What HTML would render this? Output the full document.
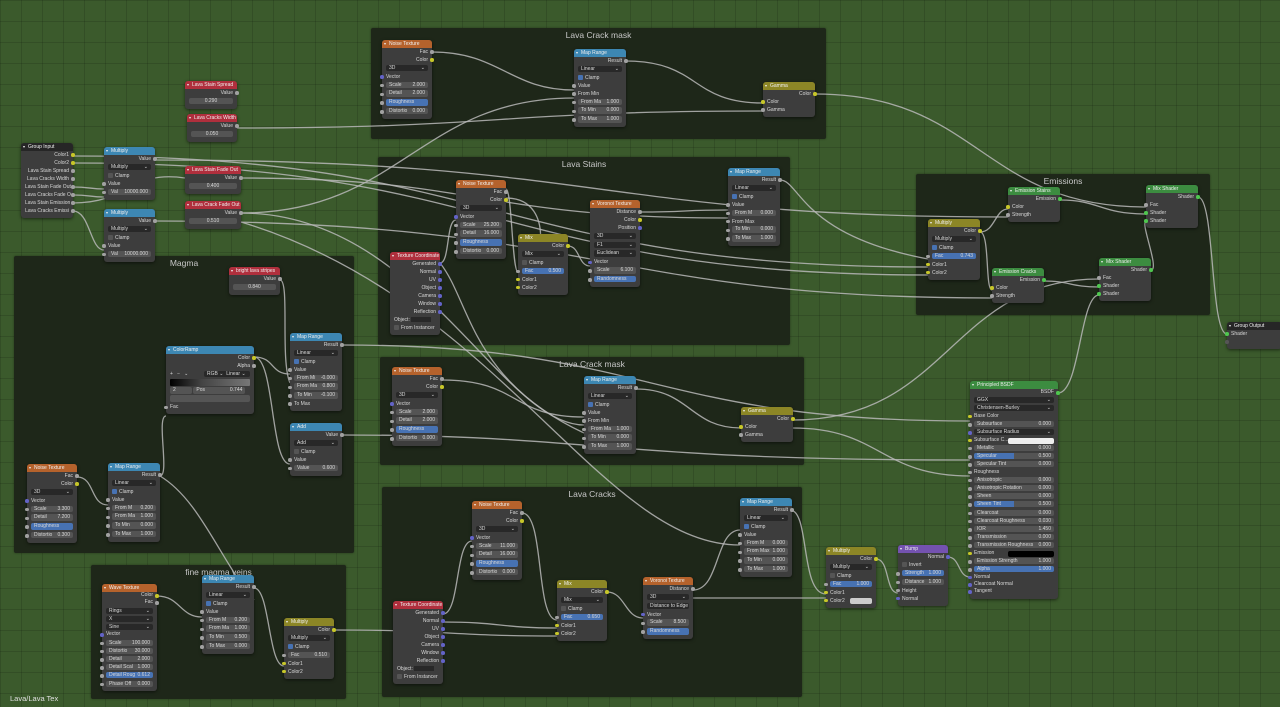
<!DOCTYPE html>
<html><head><meta charset="utf-8"><style>
*{box-sizing:border-box;margin:0;padding:0}
body{width:1280px;height:707px;overflow:hidden;background:#3b5a2c;background-image:linear-gradient(rgba(0,0,0,.13) 1px,transparent 1px),linear-gradient(90deg,rgba(0,0,0,.13) 1px,transparent 1px);background-size:21px 21px;position:relative;font-family:"Liberation Sans",sans-serif}
.fr{position:absolute;background:#1e2719;border-radius:2px;box-shadow:0 0 2px rgba(0,0,0,.4);z-index:0}
.fr span{position:absolute;top:2px;left:0;right:0;text-align:center;color:#c8c8c8;font-size:8.5px}
svg{position:absolute;left:0;top:0;z-index:1}
.n{position:absolute;background:#3d3d3d;border-radius:3px;box-shadow:0 1px 3px rgba(0,0,0,.55);font-size:5px;color:#d8d8d8;padding-bottom:3px;z-index:2}
.h{height:8px;line-height:8px;padding-left:7px;color:#eee;border-radius:3px 3px 0 0;white-space:nowrap;overflow:hidden;position:relative}
.h:before{content:"▾";position:absolute;left:2px;font-size:4px}
.o1{background:#b5622c}.b1{background:#3d87b3}.r1{background:#b02f3d}.y1{background:#8c8626}.g1{background:#3c8c40}.p1{background:#7452b0}.k1{background:#262626}
.r{height:8px;line-height:8px;padding:0 4px;position:relative;white-space:nowrap}
.o{text-align:right}
.r i{position:absolute;top:2.3px;left:-2px;width:3.6px;height:3.6px;border-radius:50%;background:#a1a1a1}
.o i{left:auto;right:-2px}
i.y{background:#c7c729}i.p{background:#6363c7}i.g{background:#4fc74f}
.f{background:#545454;height:6.5px;line-height:6.5px;margin-top:.75px;border-radius:2px;padding:0 3px;overflow:hidden;text-align:left}
.f b{float:right;font-weight:normal}
.f.bl{background:#4772b3}
.f.d{background:#282828}
.f.d:after{content:"⌄";float:right}
.c{display:inline-block;width:5px;height:5px;background:#555;vertical-align:middle;margin-right:2px;border-radius:1px}
.c.k{background:#4772b3}
.pb .r{height:7.45px;line-height:7.45px}
.pb .r i{top:2px}
.pb .f{height:6px;line-height:6px}
</style></head><body>

<div class="fr" style="left:371px;top:28px;width:455px;height:111px"><span>Lava Crack mask</span></div>
<div class="fr" style="left:378px;top:157px;width:412px;height:188px"><span>Lava Stains</span></div>
<div class="fr" style="left:916px;top:174px;width:294px;height:141px"><span>Emissions</span></div>
<div class="fr" style="left:14px;top:256px;width:340px;height:297px"><span>Magma</span></div>
<div class="fr" style="left:380px;top:357px;width:424px;height:108px"><span>Lava Crack mask</span></div>
<div class="fr" style="left:382px;top:487px;width:420px;height:210px"><span>Lava Cracks</span></div>
<div class="fr" style="left:91px;top:565px;width:255px;height:134px"><span>fine magma veins</span></div>

<svg width="1280" height="707" fill="none" stroke="#b8b8b8" stroke-width="1.3" stroke-opacity=".85">
<path d="M432 52C500 52 510 90 574 90"/>
<path d="M241 213C400 213 420 98 574 98"/>
<path d="M626 61C700 61 690 103 763 103"/>
<path d="M815 94C980 94 980 207 1146 207"/>
<path d="M237 128C500 128 500 111 763 111"/>
<path d="M73 156C500 156 500 267 928 267"/>
<path d="M73 163C500 163 500 275 928 275"/>
<path d="M73 187C90 187 90 189 104 189"/>
<path d="M73 195C90 195 90 197 104 197"/>
<path d="M73 211C90 211 90 250 104 250"/>
<path d="M73 203C130 203 130 170 185 178"/>
<path d="M155 160C600 160 600 217 1008 217"/>
<path d="M155 221C600 221 600 298 992 298"/>
<path d="M241 178C480 178 480 218 728 218"/>
<path d="M241 213C420 213 500 425 584 425"/>
<path d="M241 222C500 300 600 545 740 545"/>
<path d="M506 189C512 189 512 272 518 272"/>
<path d="M440 263C450 263 446 220 456 220"/>
<path d="M506 198C560 198 540 282 518 282"/>
<path d="M568 246C580 246 578 266 590 266"/>
<path d="M640 212C690 212 680 210 728 210"/>
<path d="M780 180C800 180 800 235 928 259"/>
<path d="M980 232C995 232 995 209 1008 209"/>
<path d="M980 232C990 232 985 290 992 290"/>
<path d="M1060 200C1100 200 1100 214 1146 214"/>
<path d="M1151 270C1160 270 1140 222 1146 222"/>
<path d="M1044 281C1070 281 1070 287 1099 287"/>
<path d="M1058 393C1080 393 1080 295 1099 295"/>
<path d="M793 420C950 420 950 279 1099 279"/>
<path d="M1198 197C1215 197 1210 334 1227 334"/>
<path d="M442 380C520 380 510 417 584 417"/>
<path d="M636 389C690 389 690 428 741 428"/>
<path d="M793 428C880 428 880 476 970 476"/>
<path d="M280 280C290 280 280 360 290 383"/>
<path d="M77 477C95 477 90 505 108 505"/>
<path d="M160 476C170 476 156 416 166 416"/>
<path d="M254 357C275 357 270 374 290 374"/>
<path d="M254 357C275 357 270 464 290 464"/>
<path d="M342 345C650 345 650 421 970 421"/>
<path d="M342 435C600 435 600 460 970 460"/>
<path d="M160 476C200 500 220 560 254 600"/>
<path d="M443 614C460 614 455 541 472 541"/>
<path d="M443 622C500 622 500 628 557 628"/>
<path d="M522 513C545 513 535 620 557 620"/>
<path d="M607 592C625 592 625 618 643 618"/>
<path d="M693 590C720 590 715 530 740 530"/>
<path d="M790 510C810 510 800 594 826 594"/>
<path d="M876 559C890 559 885 593 898 593"/>
<path d="M948 557C960 557 958 577 970 577"/>
<path d="M157 596C180 596 180 617 202 617"/>
<path d="M254 588C270 588 268 666 284 666"/>
<path d="M334 630C450 630 450 636 557 636"/>
<path d="M693 598C760 598 760 598 826 598"/>
<path d="M440 263C470 300 470 380 584 433"/>
</svg>

<div class="n" style="left:382px;top:40px;width:50px"><div class="h o1">Noise Texture</div>
<div class="r o">Fac<i></i></div><div class="r o">Color<i class="y"></i></div>
<div class="r"><div class="f d">3D</div></div><div class="r"><i class="p"></i>Vector</div>
<div class="r"><i></i><div class="f">Scale<b>2.000</b></div></div><div class="r"><i></i><div class="f">Detail<b>2.000</b></div></div>
<div class="r"><i></i><div class="f bl">Roughness<b>1.000</b></div></div><div class="r"><i></i><div class="f">Distortio<b>0.000</b></div></div></div>

<div class="n" style="left:574px;top:49px;width:52px"><div class="h b1">Map Range</div>
<div class="r o">Result<i></i></div><div class="r"><div class="f d">Linear</div></div>
<div class="r"><span class="c k"></span>Clamp</div><div class="r"><i></i>Value</div><div class="r"><i></i>From Min</div>
<div class="r"><i></i><div class="f">From Ma<b>1.000</b></div></div><div class="r"><i></i><div class="f">To Min<b>0.000</b></div></div><div class="r"><i></i><div class="f">To Max<b>1.000</b></div></div></div>

<div class="n" style="left:763px;top:82px;width:52px"><div class="h y1">Gamma</div>
<div class="r o">Color<i class="y"></i></div><div class="r"><i class="y"></i>Color</div><div class="r"><i></i>Gamma</div></div>

<div class="n" style="left:185px;top:81px;width:52px"><div class="h r1">Lava Stain Spread</div>
<div class="r o">Value<i></i></div><div class="r"><div class="f" style="text-align:center">0.290</div></div></div>
<div class="n" style="left:187px;top:114px;width:50px"><div class="h r1">Lava Cracks Width</div>
<div class="r o">Value<i></i></div><div class="r"><div class="f" style="text-align:center">0.050</div></div></div>

<div class="n" style="left:21px;top:143px;width:52px"><div class="h k1">Group Input</div>
<div class="r o">Color1<i class="y"></i></div><div class="r o">Color2<i class="y"></i></div><div class="r o">Lava Stain Spread<i></i></div>
<div class="r o">Lava Cracks Width<i></i></div><div class="r o">Lava Stain Fade Out<i></i></div><div class="r o">Lava Cracks Fade O<i></i></div>
<div class="r o">Lava Stain Emission<i></i></div><div class="r o">Lava Cracks Emissi<i></i></div></div>

<div class="n" style="left:104px;top:147px;width:51px"><div class="h b1">Multiply</div>
<div class="r o">Value<i></i></div><div class="r"><div class="f d">Multiply</div></div><div class="r"><span class="c"></span>Clamp</div>
<div class="r"><i></i>Value</div><div class="r"><i></i><div class="f">Val<b>10000.000</b></div></div></div>
<div class="n" style="left:104px;top:209px;width:51px"><div class="h b1">Multiply</div>
<div class="r o">Value<i></i></div><div class="r"><div class="f d">Multiply</div></div><div class="r"><span class="c"></span>Clamp</div>
<div class="r"><i></i>Value</div><div class="r"><i></i><div class="f">Val<b>10000.000</b></div></div></div>

<div class="n" style="left:185px;top:166px;width:56px"><div class="h r1">Lava Stain Fade Out</div>
<div class="r o">Value<i></i></div><div class="r"><div class="f" style="text-align:center">0.400</div></div></div>
<div class="n" style="left:185px;top:201px;width:56px"><div class="h r1">Lava Crack Fade Out</div>
<div class="r o">Value<i></i></div><div class="r"><div class="f" style="text-align:center">0.510</div></div></div>

<div class="n" style="left:456px;top:180px;width:50px"><div class="h o1">Noise Texture</div>
<div class="r o">Fac<i></i></div><div class="r o">Color<i class="y"></i></div>
<div class="r"><div class="f d">3D</div></div><div class="r"><i class="p"></i>Vector</div>
<div class="r"><i></i><div class="f">Scale<b>25.200</b></div></div><div class="r"><i></i><div class="f">Detail<b>16.000</b></div></div>
<div class="r"><i></i><div class="f bl">Roughness<b>0.500</b></div></div><div class="r"><i></i><div class="f">Distortio<b>0.000</b></div></div></div>

<div class="n" style="left:390px;top:252px;width:50px"><div class="h r1">Texture Coordinate</div>
<div class="r o">Generated<i class="p"></i></div><div class="r o">Normal<i class="p"></i></div><div class="r o">UV<i class="p"></i></div>
<div class="r o">Object<i class="p"></i></div><div class="r o">Camera<i class="p"></i></div><div class="r o">Window<i class="p"></i></div>
<div class="r o">Reflection<i class="p"></i></div><div class="r">Object: <span style="display:inline-block;width:20px;height:5px;background:#282828;vertical-align:middle"></span></div><div class="r"><span class="c"></span>From Instancer</div></div>

<div class="n" style="left:518px;top:234px;width:50px"><div class="h y1">Mix</div>
<div class="r o">Color<i class="y"></i></div><div class="r"><div class="f d">Mix</div></div><div class="r"><span class="c"></span>Clamp</div>
<div class="r"><i></i><div class="f bl">Fac<b>0.500</b></div></div><div class="r"><i class="y"></i>Color1</div><div class="r"><i class="y"></i>Color2</div></div>

<div class="n" style="left:590px;top:200px;width:50px"><div class="h o1">Voronoi Texture</div>
<div class="r o">Distance<i></i></div><div class="r o">Color<i class="y"></i></div><div class="r o">Position<i class="p"></i></div>
<div class="r"><div class="f d">3D</div></div><div class="r"><div class="f d">F1</div></div><div class="r"><div class="f d">Euclidean</div></div>
<div class="r"><i class="p"></i>Vector</div><div class="r"><i></i><div class="f">Scale<b>6.100</b></div></div><div class="r"><i></i><div class="f bl">Randomness<b>1.000</b></div></div></div>

<div class="n" style="left:728px;top:168px;width:52px"><div class="h b1">Map Range</div>
<div class="r o">Result<i></i></div><div class="r"><div class="f d">Linear</div></div>
<div class="r"><span class="c k"></span>Clamp</div><div class="r"><i></i>Value</div>
<div class="r"><i></i><div class="f">From M<b>0.000</b></div></div><div class="r"><i></i>From Max</div><div class="r"><i></i><div class="f">To Min<b>0.000</b></div></div><div class="r"><i></i><div class="f">To Max<b>1.000</b></div></div></div>

<div class="n" style="left:928px;top:219px;width:52px"><div class="h y1">Multiply</div>
<div class="r o">Color<i class="y"></i></div><div class="r"><div class="f d">Multiply</div></div><div class="r"><span class="c k"></span>Clamp</div>
<div class="r"><i></i><div class="f bl">Fac<b>0.743</b></div></div><div class="r"><i class="y"></i>Color1</div><div class="r"><i class="y"></i>Color2</div></div>
<div class="n" style="left:1008px;top:187px;width:52px"><div class="h g1">Emission Stains</div>
<div class="r o">Emission<i class="g"></i></div><div class="r"><i class="y"></i>Color</div><div class="r"><i></i>Strength</div></div>
<div class="n" style="left:992px;top:268px;width:52px"><div class="h g1">Emission Cracks</div>
<div class="r o">Emission<i class="g"></i></div><div class="r"><i class="y"></i>Color</div><div class="r"><i></i>Strength</div></div>
<div class="n" style="left:1146px;top:185px;width:52px"><div class="h g1">Mix Shader</div>
<div class="r o">Shader<i class="g"></i></div><div class="r"><i></i>Fac</div><div class="r"><i class="g"></i>Shader</div><div class="r"><i class="g"></i>Shader</div></div>
<div class="n" style="left:1099px;top:258px;width:52px"><div class="h g1">Mix Shader</div>
<div class="r o">Shader<i class="g"></i></div><div class="r"><i></i>Fac</div><div class="r"><i class="g"></i>Shader</div><div class="r"><i class="g"></i>Shader</div></div>
<div class="n" style="left:1227px;top:322px;width:55px"><div class="h k1">Group Output</div>
<div class="r"><i class="g"></i>Shader</div><div class="r"><i style="background:#555"></i></div></div>

<div class="n" style="left:229px;top:267px;width:51px"><div class="h r1">bright lava stripes</div>
<div class="r o">Value<i></i></div><div class="r"><div class="f" style="text-align:center">0.840</div></div></div>
<div class="n" style="left:290px;top:333px;width:52px"><div class="h b1">Map Range</div>
<div class="r o">Result<i></i></div><div class="r"><div class="f d">Linear</div></div>
<div class="r"><span class="c k"></span>Clamp</div><div class="r"><i></i>Value</div>
<div class="r"><i></i><div class="f">From Mi<b>-0.000</b></div></div><div class="r"><i></i><div class="f">From Ma<b>0.800</b></div></div><div class="r"><i></i><div class="f">To Min<b>-0.100</b></div></div><div class="r"><i></i>To Max</div></div>
<div class="n" style="left:166px;top:346px;width:88px"><div class="h b1">ColorRamp</div>
<div class="r o">Color<i class="y"></i></div><div class="r o">Alpha<i></i></div>
<div class="r">+ &nbsp; − &nbsp; ⌄ <span style="position:absolute;right:4px;top:1px;background:#282828;height:6px;line-height:6px;width:46px;border-radius:2px;padding-left:3px">RGB ⌄ &nbsp;Linear ⌄</span></div>
<div class="r"><div style="height:7px;margin-top:.5px;background:linear-gradient(90deg,#000,#444 40%,#777);border-radius:1px"></div></div>
<div class="r"><div class="f" style="display:inline-block;width:22px;vertical-align:top">2</div> <div class="f" style="display:inline-block;width:52px;vertical-align:top">Pos<b>0.744</b></div></div>
<div class="r"><div class="f" style="background:#555"></div></div><div class="r"><i></i>Fac</div></div>
<div class="n" style="left:290px;top:423px;width:52px"><div class="h b1">Add</div>
<div class="r o">Value<i></i></div><div class="r"><div class="f d">Add</div></div><div class="r"><span class="c"></span>Clamp</div>
<div class="r"><i></i>Value</div><div class="r"><i></i><div class="f">Value<b>0.600</b></div></div></div>
<div class="n" style="left:27px;top:464px;width:50px"><div class="h o1">Noise Texture</div>
<div class="r o">Fac<i></i></div><div class="r o">Color<i class="y"></i></div>
<div class="r"><div class="f d">3D</div></div><div class="r"><i class="p"></i>Vector</div>
<div class="r"><i></i><div class="f">Scale<b>3.300</b></div></div><div class="r"><i></i><div class="f">Detail<b>7.200</b></div></div>
<div class="r"><i></i><div class="f bl">Roughness<b>0.495</b></div></div><div class="r"><i></i><div class="f">Distortio<b>0.300</b></div></div></div>
<div class="n" style="left:108px;top:463px;width:52px"><div class="h b1">Map Range</div>
<div class="r o">Result<i></i></div><div class="r"><div class="f d">Linear</div></div>
<div class="r"><span class="c k"></span>Clamp</div><div class="r"><i></i>Value</div>
<div class="r"><i></i><div class="f">From M<b>0.200</b></div></div><div class="r"><i></i><div class="f">From Ma<b>1.000</b></div></div><div class="r"><i></i><div class="f">To Min<b>0.000</b></div></div><div class="r"><i></i><div class="f">To Max<b>1.000</b></div></div></div>

<div class="n" style="left:392px;top:367px;width:50px"><div class="h o1">Noise Texture</div>
<div class="r o">Fac<i></i></div><div class="r o">Color<i class="y"></i></div>
<div class="r"><div class="f d">3D</div></div><div class="r"><i class="p"></i>Vector</div>
<div class="r"><i></i><div class="f">Scale<b>2.000</b></div></div><div class="r"><i></i><div class="f">Detail<b>2.000</b></div></div>
<div class="r"><i></i><div class="f bl">Roughness<b>1.000</b></div></div><div class="r"><i></i><div class="f">Distortio<b>0.000</b></div></div></div>
<div class="n" style="left:584px;top:376px;width:52px"><div class="h b1">Map Range</div>
<div class="r o">Result<i></i></div><div class="r"><div class="f d">Linear</div></div>
<div class="r"><span class="c k"></span>Clamp</div><div class="r"><i></i>Value</div><div class="r"><i></i>From Min</div>
<div class="r"><i></i><div class="f">From Ma<b>1.000</b></div></div><div class="r"><i></i><div class="f">To Min<b>0.000</b></div></div><div class="r"><i></i><div class="f">To Max<b>1.000</b></div></div></div>
<div class="n" style="left:741px;top:407px;width:52px"><div class="h y1">Gamma</div>
<div class="r o">Color<i class="y"></i></div><div class="r"><i class="y"></i>Color</div><div class="r"><i></i>Gamma</div></div>

<div class="n pb" style="left:970px;top:381px;width:88px"><div class="h g1">Principled BSDF</div>
<div class="r o">BSDF<i class="g"></i></div>
<div class="r"><div class="f d">GGX</div></div><div class="r"><div class="f d">Christensen-Burley</div></div>
<div class="r"><i class="y"></i>Base Color</div>
<div class="r"><i></i><div class="f">Subsurface<b>0.000</b></div></div>
<div class="r"><i class="p"></i><div class="f d">Subsurface Radius</div></div>
<div class="r"><i class="y"></i>Subsurface C... <span style="position:absolute;right:4px;top:1px;width:46px;height:6px;background:#eee;border-radius:2px"></span></div>
<div class="r"><i></i><div class="f">Metallic<b>0.000</b></div></div>
<div class="r"><i></i><div class="f" style="background:linear-gradient(90deg,#4772b3 50%,#545454 50%)">Specular<b>0.500</b></div></div>
<div class="r"><i></i><div class="f">Specular Tint<b>0.000</b></div></div>
<div class="r"><i></i>Roughness</div>
<div class="r"><i></i><div class="f">Anisotropic<b>0.000</b></div></div>
<div class="r"><i></i><div class="f">Anisotropic Rotation<b>0.000</b></div></div>
<div class="r"><i></i><div class="f">Sheen<b>0.000</b></div></div>
<div class="r"><i></i><div class="f" style="background:linear-gradient(90deg,#4772b3 50%,#545454 50%)">Sheen Tint<b>0.500</b></div></div>
<div class="r"><i></i><div class="f">Clearcoat<b>0.000</b></div></div>
<div class="r"><i></i><div class="f">Clearcoat Roughness<b>0.030</b></div></div>
<div class="r"><i></i><div class="f">IOR<b>1.450</b></div></div>
<div class="r"><i></i><div class="f">Transmission<b>0.000</b></div></div>
<div class="r"><i></i><div class="f">Transmission Roughness<b>0.000</b></div></div>
<div class="r"><i class="y"></i>Emission <span style="position:absolute;right:4px;top:1px;width:46px;height:6px;background:#000;border-radius:2px"></span></div>
<div class="r"><i></i><div class="f">Emission Strength<b>1.000</b></div></div>
<div class="r"><i></i><div class="f bl">Alpha<b>1.000</b></div></div>
<div class="r"><i class="p"></i>Normal</div><div class="r"><i class="p"></i>Clearcoat Normal</div><div class="r"><i class="p"></i>Tangent</div></div>

<div class="n" style="left:472px;top:501px;width:50px"><div class="h o1">Noise Texture</div>
<div class="r o">Fac<i></i></div><div class="r o">Color<i class="y"></i></div>
<div class="r"><div class="f d">3D</div></div><div class="r"><i class="p"></i>Vector</div>
<div class="r"><i></i><div class="f">Scale<b>11.000</b></div></div><div class="r"><i></i><div class="f">Detail<b>16.000</b></div></div>
<div class="r"><i></i><div class="f bl">Roughness<b>0.500</b></div></div><div class="r"><i></i><div class="f">Distortio<b>0.000</b></div></div></div>
<div class="n" style="left:393px;top:601px;width:50px"><div class="h r1">Texture Coordinate</div>
<div class="r o">Generated<i class="p"></i></div><div class="r o">Normal<i class="p"></i></div><div class="r o">UV<i class="p"></i></div>
<div class="r o">Object<i class="p"></i></div><div class="r o">Camera<i class="p"></i></div><div class="r o">Window<i class="p"></i></div>
<div class="r o">Reflection<i class="p"></i></div><div class="r">Object: <span style="display:inline-block;width:20px;height:5px;background:#282828;vertical-align:middle"></span></div><div class="r"><span class="c"></span>From Instancer</div></div>
<div class="n" style="left:557px;top:580px;width:50px"><div class="h y1">Mix</div>
<div class="r o">Color<i class="y"></i></div><div class="r"><div class="f d">Mix</div></div><div class="r"><span class="c"></span>Clamp</div>
<div class="r"><i></i><div class="f bl">Fac<b>0.650</b></div></div><div class="r"><i class="y"></i>Color1</div><div class="r"><i class="y"></i>Color2</div></div>
<div class="n" style="left:643px;top:577px;width:50px"><div class="h o1">Voronoi Texture</div>
<div class="r o">Distance<i></i></div><div class="r"><div class="f d">3D</div></div><div class="r"><div class="f d">Distance to Edge</div></div>
<div class="r"><i class="p"></i>Vector</div><div class="r"><i></i><div class="f">Scale<b>8.500</b></div></div><div class="r"><i></i><div class="f bl">Randomness<b>1.000</b></div></div></div>
<div class="n" style="left:740px;top:498px;width:52px"><div class="h b1">Map Range</div>
<div class="r o">Result<i></i></div><div class="r"><div class="f d">Linear</div></div>
<div class="r"><span class="c k"></span>Clamp</div><div class="r"><i></i>Value</div>
<div class="r"><i></i><div class="f">From M<b>0.000</b></div></div><div class="r"><i></i><div class="f">From Max<b>1.000</b></div></div><div class="r"><i></i><div class="f">To Min<b>0.000</b></div></div><div class="r"><i></i><div class="f">To Max<b>1.000</b></div></div></div>

<div class="n" style="left:826px;top:547px;width:50px"><div class="h y1">Multiply</div>
<div class="r o">Color<i class="y"></i></div><div class="r"><div class="f d">Multiply</div></div><div class="r"><span class="c"></span>Clamp</div>
<div class="r"><i></i><div class="f bl">Fac<b>1.000</b></div></div><div class="r"><i class="y"></i>Color1</div><div class="r"><i class="y"></i>Color2 <span style="position:absolute;right:4px;top:1px;width:22px;height:6px;background:#ccc;border-radius:2px"></span></div></div>
<div class="n" style="left:898px;top:545px;width:50px"><div class="h p1">Bump</div>
<div class="r o">Normal<i class="p"></i></div><div class="r"><span class="c"></span>Invert</div>
<div class="r"><i></i><div class="f bl">Strength<b>1.000</b></div></div><div class="r"><i></i><div class="f">Distance<b>1.000</b></div></div>
<div class="r"><i></i>Height</div><div class="r"><i class="p"></i>Normal</div></div>

<div class="n pb" style="left:102px;top:584px;width:55px"><div class="h o1">Wave Texture</div>
<div class="r o">Color<i class="y"></i></div><div class="r o">Fac<i></i></div>
<div class="r"><div class="f d">Rings</div></div><div class="r"><div class="f d">X</div></div><div class="r"><div class="f d">Sine</div></div>
<div class="r"><i class="p"></i>Vector</div><div class="r"><i></i><div class="f">Scale<b>100.000</b></div></div><div class="r"><i></i><div class="f">Distortio<b>30.000</b></div></div>
<div class="r"><i></i><div class="f">Detail<b>2.000</b></div></div><div class="r"><i></i><div class="f">Detail Scal<b>1.000</b></div></div>
<div class="r"><i></i><div class="f bl">Detail Roug<b>0.612</b></div></div><div class="r"><i></i><div class="f">Phase Off<b>0.000</b></div></div></div>
<div class="n" style="left:202px;top:575px;width:52px"><div class="h b1">Map Range</div>
<div class="r o">Result<i></i></div><div class="r"><div class="f d">Linear</div></div>
<div class="r"><span class="c k"></span>Clamp</div><div class="r"><i></i>Value</div>
<div class="r"><i></i><div class="f">From M<b>0.200</b></div></div><div class="r"><i></i><div class="f">From Ma<b>1.000</b></div></div><div class="r"><i></i><div class="f">To Min<b>0.500</b></div></div><div class="r"><i></i><div class="f">To Max<b>0.000</b></div></div></div>
<div class="n" style="left:284px;top:618px;width:50px"><div class="h y1">Multiply</div>
<div class="r o">Color<i class="y"></i></div><div class="r"><div class="f d">Multiply</div></div><div class="r"><span class="c k"></span>Clamp</div>
<div class="r"><i></i><div class="f">Fac<b>0.510</b></div></div><div class="r"><i class="y"></i>Color1</div><div class="r"><i class="y"></i>Color2</div></div>

<div style="position:absolute;left:10px;top:694px;color:#e0e0e0;font-size:7.5px">Lava/Lava Tex</div>
</body></html>
